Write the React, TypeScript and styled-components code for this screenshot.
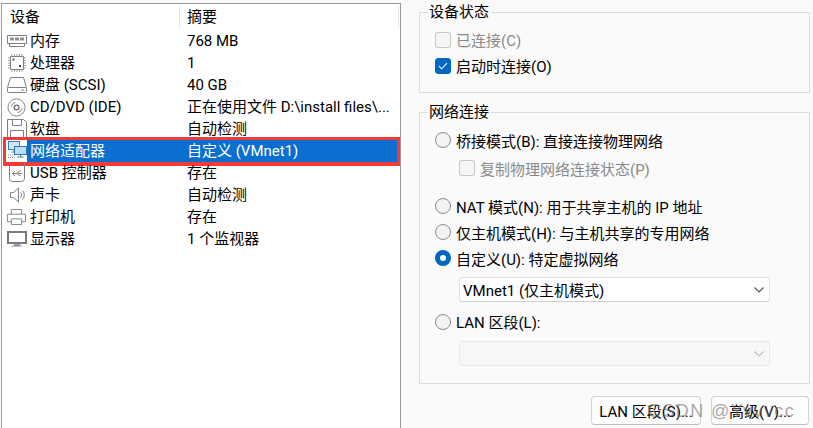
import React from "react";
import styled, { createGlobalStyle } from "styled-components";

const GlobalStyle = createGlobalStyle`
  html, body {
    margin: 0;
    padding: 0;
    background: #fafafa;
  }
  * {
    box-sizing: border-box;
  }
`;

const fontStack = `Roboto, "Noto Sans CJK SC", sans-serif`;

const Page = styled.div`
  position: relative;
  width: 813px;
  height: 428px;
  overflow: hidden;
  display: flex;
  align-items: flex-start;
  background: #fafafa;
  font-family: ${fontStack};
  font-size: 15px;
  color: #000;
`;

/* left side: hardware list */
const ListPane = styled.div`
  width: 400px;
  height: 430px;
  margin: 3px 0 0 1px;
  flex-shrink: 0;
  background: #fff;
  border: 1px solid #9a9a9a;
`;

const HeaderRow = styled.div`
  display: grid;
  grid-template-columns: 177px 1fr;
  height: 26px;
  align-items: center;
`;

const HeaderCell = styled.div<{ $divider?: boolean }>`
  height: 22px;
  line-height: 22px;
  padding-left: ${(p) => (p.$divider ? "7px" : "8px")};
  margin-right: ${(p) => (p.$divider ? "1px" : "0")};
  border-left: ${(p) => (p.$divider ? "1px solid #e5e5e5" : "none")};
  border-right: ${(p) => (p.$divider ? "1px solid #e5e5e5" : "none")};
`;

const Row = styled.div`
  position: relative;
  display: grid;
  grid-template-columns: 177px 1fr;
  height: 22px;
  line-height: 22px;
`;

const NameCell = styled.div`
  display: flex;
  align-items: center;
  padding-left: 4px;
`;

const IconSlot = styled.span`
  display: flex;
  width: 21px;
  height: 22px;
  align-items: center;
  justify-content: center;
  flex-shrink: 0;
`;

const NameText = styled.span<{ $selected?: boolean }>`
  flex: 1;
  height: 22px;
  padding-left: 3px;
  white-space: nowrap;
  color: ${(p) => (p.$selected ? "#fff" : "#000")};
  background: ${(p) => (p.$selected ? "#0a6fce" : "transparent")};
`;

const SummaryCell = styled.div<{ $selected?: boolean }>`
  padding-left: 8px;
  white-space: nowrap;
  overflow: hidden;
  color: ${(p) => (p.$selected ? "#fff" : "#000")};
  background: ${(p) => (p.$selected ? "#0a6fce" : "transparent")};
`;

const RedFrame = styled.div`
  position: absolute;
  left: 1px;
  right: 0;
  top: -3px;
  bottom: -4px;
  border: 3px solid #f23a3a;
  border-bottom-width: 4px;
  pointer-events: none;
`;

/* right side: settings */
const SettingsPane = styled.div`
  flex: 1;
  padding: 12px 3px 0 18px;
  display: flex;
  flex-direction: column;
`;

const Group = styled.div<{ $height: number; $gap?: number }>`
  position: relative;
  height: ${(p) => p.$height}px;
  margin-bottom: ${(p) => p.$gap ?? 0}px;
  border: 1px solid #dcdcdc;
  display: flex;
  flex-direction: column;
  padding: 14px 0 0 15px;
`;

const Legend = styled.div`
  position: absolute;
  left: 8px;
  top: -11px;
  padding: 0 2px 0 1px;
  line-height: 20px;
  background: #fafafa;
`;

const OptionRow = styled.div<{ $indent?: boolean; $height?: number }>`
  display: flex;
  align-items: center;
  gap: 5px;
  height: ${(p) => p.$height ?? 26}px;
  padding-left: ${(p) => (p.$indent ? "24px" : "0")};
  white-space: nowrap;
`;

const OptionLabel = styled.span<{ $disabled?: boolean }>`
  color: ${(p) => (p.$disabled ? "#8a8a8a" : "#000")};
`;

const CheckBox = styled.span<{ $checked?: boolean }>`
  display: flex;
  align-items: center;
  justify-content: center;
  width: 16px;
  height: 16px;
  border-radius: 3px;
  flex-shrink: 0;
  background: ${(p) => (p.$checked ? "#0067c0" : "#f5f5f5")};
  border: 1px solid ${(p) => (p.$checked ? "#0067c0" : "#c6c6c6")};
`;

const Radio = styled.span<{ $checked?: boolean }>`
  display: block;
  width: 16px;
  height: 16px;
  border-radius: 50%;
  flex-shrink: 0;
  background: ${(p) => (p.$checked ? "#fff" : "#f3f3f3")};
  border: ${(p) => (p.$checked ? "5px solid #0067c0" : "1px solid #8b8b8b")};
`;

const Select = styled.div<{ $disabled?: boolean }>`
  display: flex;
  align-items: center;
  justify-content: space-between;
  width: 311px;
  height: 25px;
  margin-left: 24px;
  padding: 0 5px 0 3px;
  border-radius: 3px;
  background: ${(p) => (p.$disabled ? "#f7f7f7" : "#fff")};
  border: 1px solid ${(p) => (p.$disabled ? "#e8e8e8" : "#e2e2e2")};
  border-bottom-color: ${(p) => (p.$disabled ? "#e8e8e8" : "#cfcfcf")};
  white-space: nowrap;
`;

const ButtonBar = styled.div`
  display: flex;
  justify-content: flex-end;
  gap: 10px;
  margin-top: 12px;
  padding-right: 1px;
`;

const Button = styled.div<{ $width: number }>`
  display: flex;
  align-items: center;
  justify-content: center;
  width: ${(p) => p.$width}px;
  height: 29px;
  border-radius: 4px;
  background: #fdfdfd;
  border: 1px solid #d4d4d4;
  border-bottom-color: #bcbcbc;
  white-space: nowrap;
`;

const Watermark = styled.div`
  position: absolute;
  left: 648px;
  top: 400px;
  font-family: "Liberation Sans", sans-serif;
  font-size: 18px;
  line-height: 22px;
  letter-spacing: 1.4px;
  color: rgba(110, 110, 110, 0.6);
  white-space: nowrap;
  pointer-events: none;
`;

const stroke = { fill: "none", stroke: "#808080", strokeWidth: 1 };

const MemoryIcon = () => (
  <svg width="20" height="14" viewBox="0 0 20 14">
    <path d="M.5 1.500h19v8h-19zM2.500 9.500v3h15v-3" {...stroke} />
    <path d="M3 3.500h4v3H3zM8 3.500h4v3H8zM13 3.500h4v3h-4z" fill="#8f8f8f" />
  </svg>
);

const CpuIcon = () => (
  <svg width="20" height="20" viewBox="0 0 20 20">
    <path d="M3.500 3.500h13v13h-13z" {...stroke} />
    <path
      d="M5 1v2M7.500 1v2M10 1v2M12.500 1v2M15 1v2M5 17v2M7.500 17v2M10 17v2M12.500 17v2M15 17v2M1 5h2M1 7.500h2M1 10h2M1 12.500h2M1 15h2M17 5h2M17 7.500h2M17 10h2M17 12.500h2M17 15h2"
      fill="none"
      stroke="#a0a0a0"
    />
    <path d="M5.500 5.500h2v2h-2zM12 12h2v2h-2z" fill="#555" />
  </svg>
);

const DiskIcon = () => (
  <svg width="20" height="16" viewBox="0 0 20 16">
    <path d="M.5 10.500 3.500.5h13l3 10" {...stroke} />
    <rect x=".5" y="10.500" width="19" height="5" rx="1" {...stroke} />
    <path d="M14 13h3" stroke="#808080" />
  </svg>
);

const DiscIcon = () => (
  <svg width="19" height="19" viewBox="0 0 20 20">
    <circle cx="10" cy="10" r="9" {...stroke} />
    <circle cx="10" cy="10" r="2.500" fill="none" stroke="#707070" strokeWidth="1.400" />
    <path d="M4.500 9A5.500 5.500 0 0 1 9 4.500M15.500 11A5.500 5.500 0 0 1 11 15.500" {...stroke} />
  </svg>
);

const FloppyIcon = () => (
  <svg width="20" height="20" viewBox="0 0 20 20">
    <path d="M.5.500h16l3 3v16H.5z" {...stroke} />
    <path d="M5.500.5v6h9v-6M3.500 19.500v-8h13v8" {...stroke} />
  </svg>
);

const NetworkIcon = () => (
  <svg width="20" height="20" viewBox="0 0 20 20">
    <rect x="1.500" y=".5" width="11" height="8" fill="#cfe6fa" stroke="#3b7fb8" />
    <path d="M7 8.500v2M4.500 11h5" stroke="#3b7fb8" />
    <rect x="7.500" y="5.500" width="12" height="8" fill="#bcdcf7" stroke="#2f78b5" />
    <path d="M13.500 13.500v2M10.500 16h6" stroke="#2f78b5" />
    <path d="M1 14h6M1 16.500h8" stroke="#8a8a8a" strokeDasharray="1 1" />
  </svg>
);

const UsbIcon = () => (
  <svg width="20" height="20" viewBox="0 0 20 20">
    <path d="M2.500 0v15.500a3 3 0 0 0 3 3h9a3 3 0 0 0 3-3V0" {...stroke} />
    <path d="M5 10.500h10M8 8 5.500 10.500 8 13M10 10.500l2-2.500h2M10 10.500l2 2h1.500" {...stroke} />
  </svg>
);

const SoundIcon = () => (
  <svg width="20" height="16" viewBox="0 0 20 16">
    <path d="M3.500 5.500h3l5-4.500v14l-5-4.500h-3z" {...stroke} />
    <path d="M13.500 5.500a3.500 3.500 0 0 1 0 5M15.500 3.500a6.500 6.500 0 0 1 0 9" {...stroke} />
  </svg>
);

const PrinterIcon = () => (
  <svg width="19" height="16" viewBox="0 0 20 17">
    <path d="M4.500 5.500v-5h11v5" {...stroke} />
    <path d="M4.500 13.500h-4v-8h19v8h-4" {...stroke} />
    <path d="M4.500 10.500h11v6h-11z" {...stroke} />
  </svg>
);

const MonitorIcon = () => (
  <svg width="20" height="16" viewBox="0 0 20 16">
    <rect x="1" y="1" width="18" height="11" fill="#fff" stroke="#7a7a7a" strokeWidth="2" />
    <path d="M7.500 13h5v1.500h-5zM4.500 15h11" stroke="#8f8f8f" fill="#a8a8a8" />
  </svg>
);

const TickIcon = () => (
  <svg width="10" height="8" viewBox="0 0 10 8">
    <path d="M1 4.200 3.600 6.800 9 1.200" fill="none" stroke="#fff" strokeWidth="1.100" />
  </svg>
);

const Chevron = ({ color }: { color: string }) => (
  <svg width="10" height="6" viewBox="0 0 10 6">
    <path d="M.5.500 5 5 9.500.5" fill="none" stroke={color} strokeWidth="1.100" />
  </svg>
);

const devices = [
  { name: "内存", summary: "768 MB", icon: <MemoryIcon /> },
  { name: "处理器", summary: "1", icon: <CpuIcon /> },
  { name: "硬盘 (SCSI)", summary: "40 GB", icon: <DiskIcon /> },
  { name: "CD/DVD (IDE)", summary: "正在使用文件 D:\\install files\\...", icon: <DiscIcon /> },
  { name: "软盘", summary: "自动检测", icon: <FloppyIcon /> },
  { name: "网络适配器", summary: "自定义 (VMnet1)", icon: <NetworkIcon />, selected: true },
  { name: "USB 控制器", summary: "存在", icon: <UsbIcon /> },
  { name: "声卡", summary: "自动检测", icon: <SoundIcon /> },
  { name: "打印机", summary: "存在", icon: <PrinterIcon /> },
  { name: "显示器", summary: "1 个监视器", icon: <MonitorIcon /> },
];

const App: React.FC = () => {
  return (
    <Page>
      <GlobalStyle />
      <ListPane>
        <HeaderRow>
          <HeaderCell>设备</HeaderCell>
          <HeaderCell $divider>摘要</HeaderCell>
        </HeaderRow>
        {devices.map((d) => (
          <Row key={d.name}>
            <NameCell>
              <IconSlot>{d.icon}</IconSlot>
              <NameText $selected={d.selected}>{d.name}</NameText>
            </NameCell>
            <SummaryCell $selected={d.selected}>{d.summary}</SummaryCell>
            {d.selected && <RedFrame />}
          </Row>
        ))}
      </ListPane>

      <SettingsPane>
        <Group $height={81} $gap={19}>
          <Legend>设备状态</Legend>
          <OptionRow $height={25}>
            <CheckBox />
            <OptionLabel $disabled>已连接(C)</OptionLabel>
          </OptionRow>
          <OptionRow $height={27}>
            <CheckBox $checked>
              <TickIcon />
            </CheckBox>
            <OptionLabel>启动时连接(O)</OptionLabel>
          </OptionRow>
        </Group>

        <Group $height={272}>
          <Legend>网络连接</Legend>
          <OptionRow>
            <Radio />
            <OptionLabel>桥接模式(B): 直接连接物理网络</OptionLabel>
          </OptionRow>
          <OptionRow $indent $height={30}>
            <CheckBox />
            <OptionLabel $disabled>复制物理网络连接状态(P)</OptionLabel>
          </OptionRow>
          <OptionRow $height={10} />
          <OptionRow>
            <Radio />
            <OptionLabel>NAT 模式(N): 用于共享主机的 IP 地址</OptionLabel>
          </OptionRow>
          <OptionRow>
            <Radio />
            <OptionLabel>仅主机模式(H): 与主机共享的专用网络</OptionLabel>
          </OptionRow>
          <OptionRow>
            <Radio $checked />
            <OptionLabel>自定义(U): 特定虚拟网络</OptionLabel>
          </OptionRow>
          <OptionRow $height={6} />
          <Select>
            <span>VMnet1 (仅主机模式)</span>
            <Chevron color="#555" />
          </Select>
          <OptionRow $height={39}>
            <Radio />
            <OptionLabel>LAN 区段(L):</OptionLabel>
          </OptionRow>
          <Select $disabled>
            <span />
            <Chevron color="#bdbdbd" />
          </Select>
        </Group>

        <ButtonBar>
          <Button $width={110}>LAN 区段(S)...</Button>
          <Button $width={98}>高级(V)...</Button>
        </ButtonBar>
      </SettingsPane>
      <Watermark>CSDN @Yvvvcc</Watermark>
    </Page>
  );
};

export default App;
